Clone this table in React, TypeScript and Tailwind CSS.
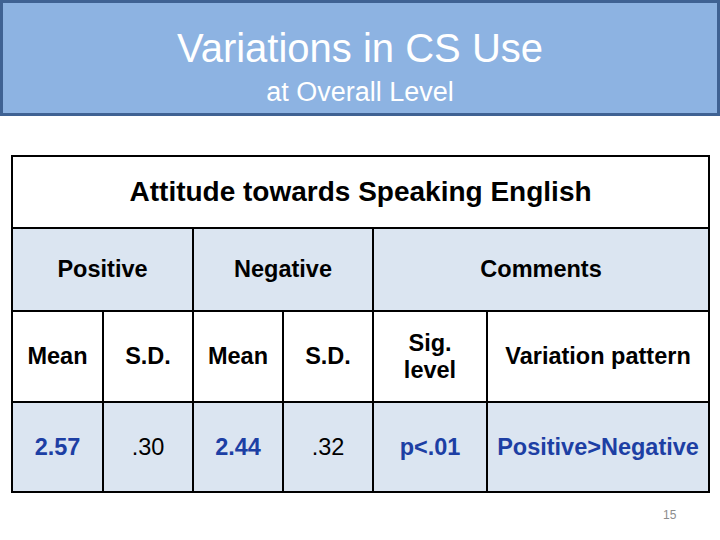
const font = { fontFamily: '"Liberation Sans", Arial, sans-serif' };

const cell = "border-2 border-black text-center align-middle font-bold text-[23.5px] leading-[27px] text-black";

export default function App() {
  return (
    <div className="w-[720px] h-[540px] bg-white relative overflow-hidden" style={font}>
      <div className="h-[116px] bg-[#8db3e2] border-[3px] border-[#3f6293] flex flex-col items-center text-white">
        <div className="mt-[22px] text-[40px] leading-[46px]">Variations in CS Use</div>
        <div className="mt-[6px] text-[27px] leading-[30px]">at Overall Level</div>
      </div>

      <table className="ml-[11px] mt-[39px] w-[697px] table-fixed border-collapse">
        <colgroup>
          <col className="w-[91px]" />
          <col className="w-[90px]" />
          <col className="w-[90px]" />
          <col className="w-[90px]" />
          <col className="w-[114px]" />
          <col className="w-[222px]" />
        </colgroup>
        <tbody>
          <tr className="h-[72px]">
            <td colSpan={6} className="border-2 border-black text-center align-middle font-bold text-[28px] text-black bg-white">
              Attitude towards Speaking English
            </td>
          </tr>
          <tr className="h-[83px] bg-[#dbe5f1]">
            <td colSpan={2} className={cell}>Positive</td>
            <td colSpan={2} className={cell}>Negative</td>
            <td colSpan={2} className={cell}>Comments</td>
          </tr>
          <tr className="h-[91px] bg-white">
            <td className={cell}>Mean</td>
            <td className={cell}>S.D.</td>
            <td className={cell}>Mean</td>
            <td className={cell}>S.D.</td>
            <td className={cell}>Sig.<br />level</td>
            <td className={cell}>Variation pattern</td>
          </tr>
          <tr className="h-[90px] bg-[#dbe5f1]">
            <td className={`${cell} !text-[#1d3fa4]`}>2.57</td>
            <td className={`${cell} !font-normal`}>.30</td>
            <td className={`${cell} !text-[#1d3fa4]`}>2.44</td>
            <td className={`${cell} !font-normal`}>.32</td>
            <td className={`${cell} !text-[#1d3fa4]`}>p&lt;.01</td>
            <td className={`${cell} !text-[#1d3fa4]`}>Positive&gt;Negative</td>
          </tr>
        </tbody>
      </table>

      <div className="absolute left-[663px] top-[506px] text-[12px] text-[#8c8c8c]">15</div>
    </div>
  );
}
